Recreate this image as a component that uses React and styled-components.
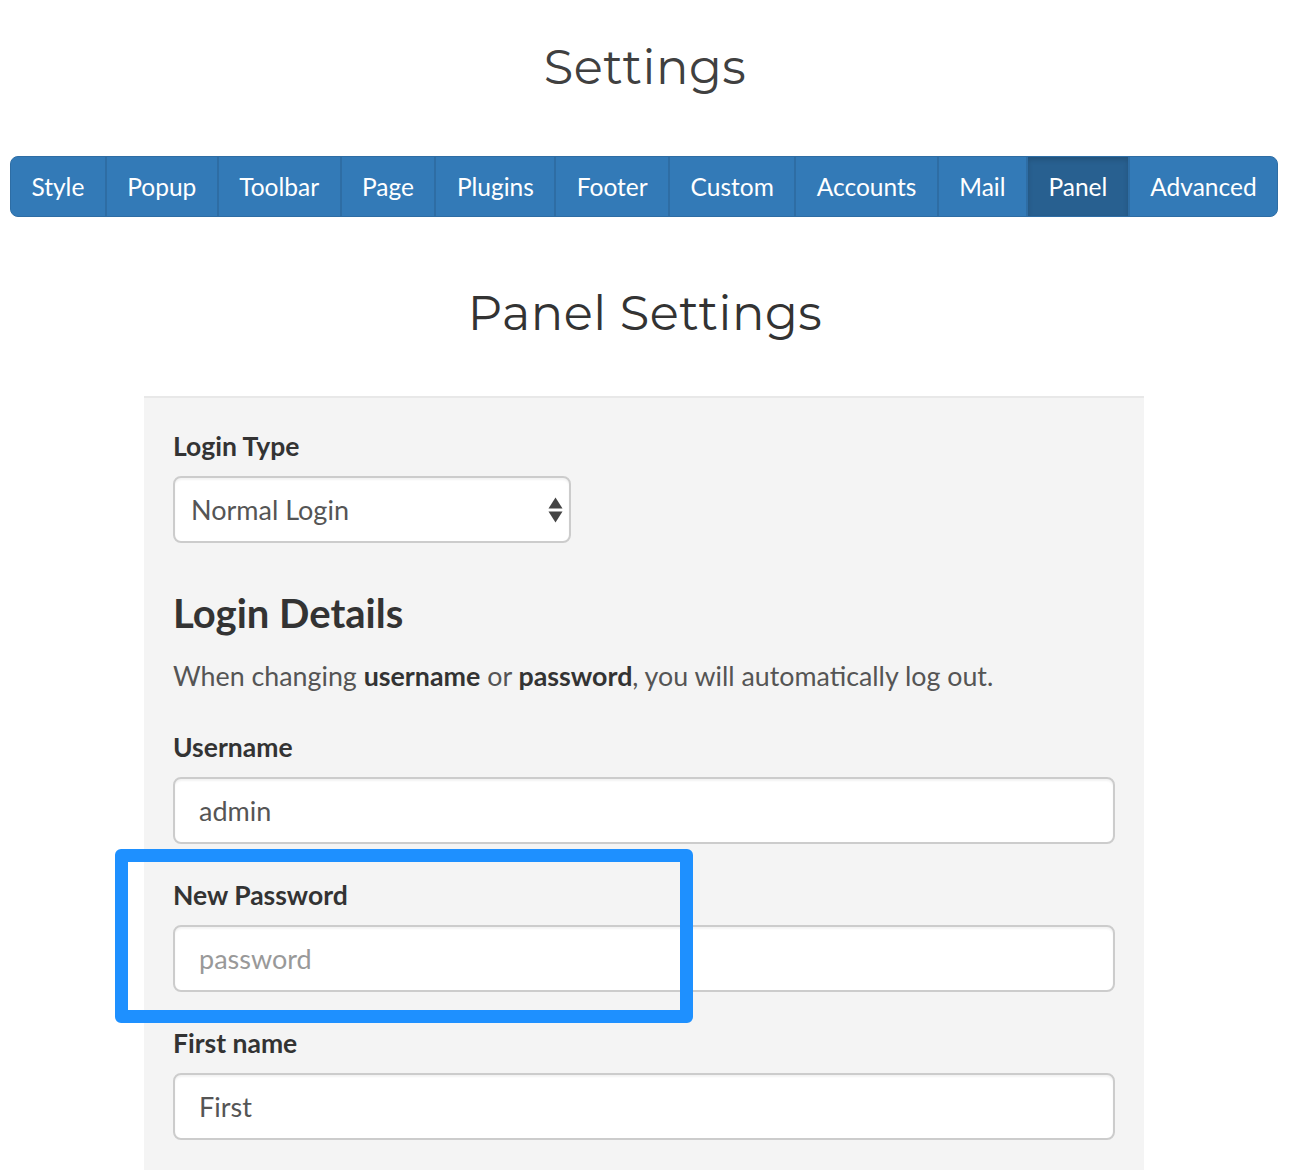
import React from "react";
import styled, { createGlobalStyle } from "styled-components";

const Global = createGlobalStyle`
  html, body { margin: 0; padding: 0; background: #fff; }
  body { font-family: "Source Sans Pro", Lato, "Liberation Sans", sans-serif; color: #333; }
  * { box-sizing: border-box; }
`;

const Page = styled.div`
  position: relative;
  width: 1290px;
  min-height: 1170px;
  overflow: hidden;
`;

const Title = styled.h1`
  margin: 37px 0 59px;
  font-family: Montserrat, "Open Sans", sans-serif;
  font-weight: 400;
  font-size: 48px;
  line-height: 60px;
  text-align: center;
  color: #404040;
  letter-spacing: 0.5px;
`;

const TabBar = styled.div`
  display: flex;
  margin: 0 12px 0 10px;
  border-radius: 8px;
  overflow: hidden;
  border: 1px solid #2e6da4;
  background: #337ab7;
`;

const Tab = styled.button`
  flex: 1 1 auto;
  height: 59px;
  padding: 0;
  border: none;
  border-left: ${(p) => (p.$first ? "none" : "2px solid #2e6da4")};
  background: ${(p) => (p.$active ? "#286090" : "#337ab7")};
  box-shadow: ${(p) => (p.$active ? "inset 0 3px 5px rgba(0,0,0,0.15)" : "none")};
  color: #fff;
  font-family: "Source Sans Pro", Lato, sans-serif;
  font-size: 24.5px;
  cursor: pointer;
`;

const PanelTitle = styled.h2`
  margin: 66px 0 53px;
  font-family: Montserrat, "Open Sans", sans-serif;
  font-weight: 400;
  font-size: 48px;
  line-height: 60px;
  text-align: center;
  color: #333;
  letter-spacing: 0.5px;
`;

const Panel = styled.div`
  width: 1000px;
  margin: 0 0 0 144px;
  padding: 31px 29px 40px;
  background: #f4f4f4;
  border-top: 2px solid #e8e8e8;
  min-height: 800px;
`;

const Group = styled.div`
  margin-bottom: ${(p) => p.$mb ?? 34}px;
`;

const Label = styled.label`
  display: block;
  font-size: 26.5px;
  line-height: 34px;
  font-weight: 700;
  color: #333;
  margin-bottom: 13px;
`;

const SelectBox = styled.div`
  position: relative;
  width: 398px;
  height: 67px;
  background: #fff;
  border: 2px solid #ccc;
  border-radius: 8px;
  box-shadow: inset 0 2px 2px rgba(0, 0, 0, 0.05);
  display: flex;
  align-items: center;
  padding-left: 16px;
  font-size: 27px;
  color: #555;
`;

const Arrows = styled.svg`
  position: absolute;
  right: 6px;
  top: 50%;
  transform: translateY(-50%);
`;

const SubTitle = styled.h3`
  margin: 49px 0 25px;
  font-size: 40px;
  line-height: 42px;
  font-weight: 700;
  color: #333;
`;

const Note = styled.p`
  margin: 0 0 37px;
  font-size: 26.8px;
  line-height: 34px;
  color: #555;
  b { font-weight: 700; color: #333; }
`;

const Input = styled.input`
  display: block;
  width: 100%;
  height: 67px;
  border: 2px solid #ccc;
  border-radius: 8px;
  background: #fff;
  box-shadow: inset 0 2px 2px rgba(0, 0, 0, 0.05);
  padding: 0 24px;
  font-family: "Source Sans Pro", Lato, sans-serif;
  font-size: 27px;
  color: #555;
  outline: none;
  &::placeholder { color: #999; }
`;

const Highlight = styled.div`
  position: absolute;
  left: 115px;
  top: 849px;
  width: 578px;
  height: 174px;
  border: 13px solid #1e90ff;
  border-radius: 6px;
  pointer-events: none;
`;

const tabs = ["Style", "Popup", "Toolbar", "Page", "Plugins", "Footer", "Custom", "Accounts", "Mail", "Panel", "Advanced"];

export default function App() {
  return (
    <Page>
      <Global />
      <Title>Settings</Title>
      <TabBar>
        {tabs.map((t, i) => (
          <Tab key={t} $first={i === 0} $active={t === "Panel"}>{t}</Tab>
        ))}
      </TabBar>
      <PanelTitle>Panel Settings</PanelTitle>
      <Panel>
        <Group $mb={0}>
          <Label>Login Type</Label>
          <SelectBox>
            Normal Login
            <Arrows width="15" height="27" viewBox="0 0 15 27">
              <polygon points="7.5,1 14.5,12 0.5,12" fill="#444" />
              <polygon points="0.5,15 14.5,15 7.5,26" fill="#444" />
            </Arrows>
          </SelectBox>
        </Group>
        <SubTitle>Login Details</SubTitle>
        <Note>
          When changing <b>username</b> or <b>password</b>, you will automatically log out.
        </Note>
        <Group>
          <Label>Username</Label>
          <Input defaultValue="admin" />
        </Group>
        <Group>
          <Label>New Password</Label>
          <Input type="password" placeholder="password" />
        </Group>
        <Group>
          <Label>First name</Label>
          <Input defaultValue="First" />
        </Group>
      </Panel>
      <Highlight />
    </Page>
  );
}
